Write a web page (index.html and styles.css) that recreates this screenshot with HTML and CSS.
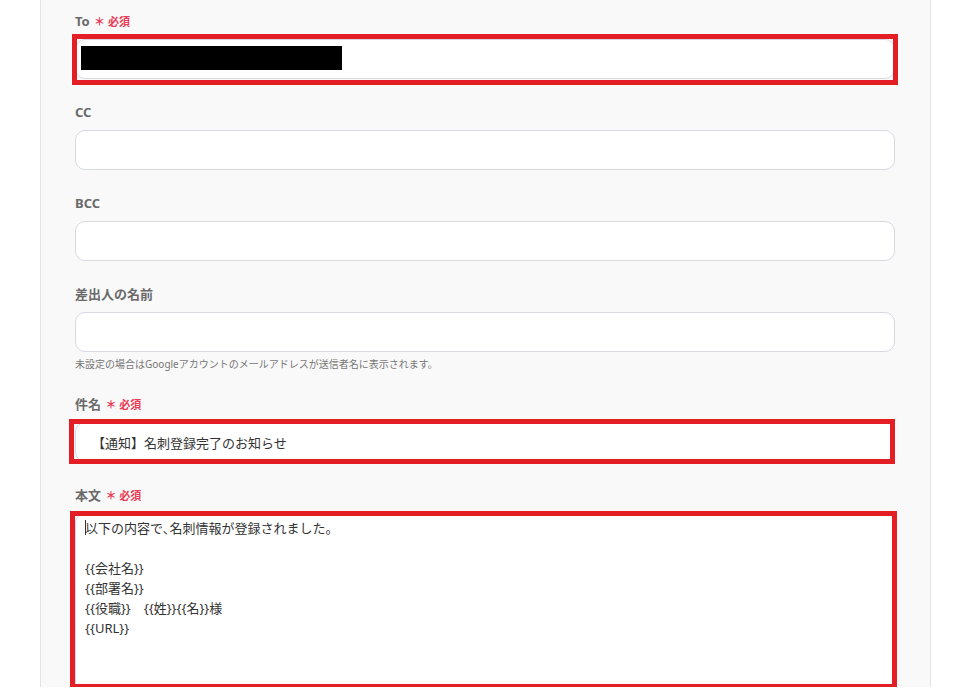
FILE: index.html
```html
<!DOCTYPE html>
<html lang="ja">
<head>
  <meta charset="UTF-8">
  <meta name="viewport" content="width=device-width, initial-scale=1.0">
  <title>メール送信設定</title>
  <link rel="stylesheet" href="styles.css">
</head>
<body>
  <div class="panel">
    <form class="mail-form">
      <!-- 宛先 -->
      <div class="field">
        <label class="field-label">To <span class="required">＊ 必須</span></label>
        <div class="control">
          <input type="text" class="text-input">
          <span class="redacted"></span>
          <span class="mark mark-to"></span>
        </div>
      </div>

      <div class="field">
        <label class="field-label">CC</label>
        <div class="control">
          <input type="text" class="text-input">
        </div>
      </div>

      <div class="field">
        <label class="field-label">BCC</label>
        <div class="control">
          <input type="text" class="text-input">
        </div>
      </div>

      <div class="field">
        <label class="field-label">差出人の名前</label>
        <div class="control">
          <input type="text" class="text-input">
        </div>
        <p class="hint">未設定の場合はGoogleアカウントのメールアドレスが送信者名に表示されます。</p>
      </div>

      <!-- 件名 -->
      <div class="field">
        <label class="field-label">件名 <span class="required">＊ 必須</span></label>
        <div class="control">
          <input type="text" class="text-input subject-input" value="【通知】名刺登録完了のお知らせ">
          <span class="mark mark-subject"></span>
        </div>
      </div>

      <!-- 本文 -->
      <div class="field">
        <label class="field-label">本文 <span class="required">＊ 必須</span></label>
        <div class="control">
          <textarea class="text-area">以下の内容で､名刺情報が登録されました。

{{会社名}}
{{部署名}}
{{役職}}　{{姓}}{{名}}様
{{URL}}</textarea>
          <span class="caret"></span>
          <span class="mark mark-body"></span>
        </div>
      </div>
    </form>
  </div>
</body>
</html>
```

FILE: styles.css
```css
body {
  margin: 0;
  background: #fff;
  font-family: "Noto Sans", "Noto Sans CJK JP", sans-serif;
  color: #333;
}
.panel {
  margin-left: 40px;
  width: 891px;
  box-sizing: border-box;
  background: #f9f9f9;
  border-left: 1px solid #e4e4e4;
  border-right: 1px solid #e4e4e4;
  padding: 12px 34px 0 34px;
}
.field {
  margin-bottom: 24px;
}
.field:last-child {
  margin-bottom: 0;
}
.field-label {
  display: block;
  height: 18px;
  line-height: 18px;
  margin-bottom: 9px;
  font-size: 13px;
  font-weight: bold;
  color: #6a6a6a;
}
.required {
  color: #ea3a55;
  font-size: 11px;
  font-weight: bold;
  margin-left: 1px;
}
.control {
  position: relative;
}
.text-input {
  display: block;
  width: 820px;
  height: 40px;
  box-sizing: border-box;
  border: 1px solid #d6d9e0;
  border-radius: 10px;
  background: #fff;
  padding: 0 9px;
  font-family: inherit;
  font-size: 13px;
  color: #333;
  outline: none;
}
.subject-input {
  padding-left: 16px;
}
.text-area {
  display: block;
  width: 820px;
  height: 174px;
  box-sizing: border-box;
  border: 1px solid #d6d9e0;
  border-radius: 10px 10px 0 0;
  background: #fff;
  padding: 4px 9px;
  font-family: inherit;
  font-size: 13px;
  line-height: 20px;
  color: #333;
  resize: none;
  outline: none;
}
.hint {
  margin: 5px 0 0;
  font-size: 10px;
  line-height: 14px;
  color: #777;
}
.redacted {
  position: absolute;
  left: 6px;
  top: 7px;
  width: 261px;
  height: 24px;
  background: #000;
}
.caret {
  position: absolute;
  left: 10px;
  top: 7px;
  width: 1px;
  height: 15px;
  background: #333;
}
/* 赤枠の強調表示 */
.mark {
  position: absolute;
  border: 5px solid #e31e24;
  box-sizing: border-box;
  pointer-events: none;
}
.mark-to {
  left: -3px;
  right: -2px;
  top: -5px;
  bottom: -6px;
}
.mark-subject {
  left: -6px;
  right: 1px;
  top: -3px;
  bottom: -2px;
}
.mark-body {
  left: -5px;
  right: -1px;
  top: -2px;
  bottom: -2px;
}
```
